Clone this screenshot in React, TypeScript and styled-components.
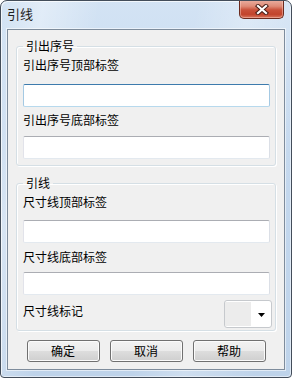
import React from "react";
import styled, { createGlobalStyle } from "styled-components";

const GlobalStyle = createGlobalStyle`
  html, body { margin: 0; padding: 0; background: #ffffff; }
  body { font-family: "Noto Sans CJK SC", "Noto Sans", sans-serif; }
  * { box-sizing: border-box; }
`;

const Window = styled.div`
  width: 292px;
  height: 378px;
  border: 1px solid #434d5a;
  border-radius: 7px 7px 4px 4px;
  overflow: hidden;
  display: flex;
  flex-direction: column;
  background:
    linear-gradient(100deg, rgba(255,255,255,0) 0%, rgba(255,255,255,0.35) 12%, rgba(255,255,255,0) 28%, rgba(255,255,255,0) 55%, rgba(255,255,255,0.25) 70%, rgba(255,255,255,0) 90%),
    linear-gradient(180deg, #d3e3f4 0%, #c4d8ee 40%, #bed3ea 100%);
  box-shadow: inset 1px 1px 0 rgba(255,255,255,0.7), inset -1px -1px 0 rgba(255,255,255,0.5);
`;

const TitleBar = styled.div`
  height: 28px;
  flex: none;
  display: flex;
  justify-content: space-between;
  align-items: flex-start;
  padding-left: 6px;
`;

const Title = styled.span`
  font-size: 13px;
  line-height: 16px;
  margin-top: 5px;
  color: #1e1e1e;
`;

const CloseButton = styled.div`
  width: 45px;
  height: 19px;
  margin-top: -1px;
  margin-right: 7px;
  border: 1px solid #6b2a1e;
  border-top: none;
  border-radius: 0 0 5px 5px;
  background: linear-gradient(180deg, #eab0a2 0%, #de8a76 35%, #c9513a 55%, #c2442c 80%, #d8765e 100%);
  box-shadow: inset 0 0 0 1px rgba(255, 210, 200, 0.45);
  display: flex;
  align-items: center;
  justify-content: center;
`;

const Client = styled.div`
  flex: none;
  height: 341px;
  margin: 0 6px;
  border: 1px solid #7e8c9c;
  background: #f0f0f0;
  padding: 0 8px;
  display: flex;
  flex-direction: column;
  box-shadow: 0 0 0 1px rgba(255, 255, 255, 0.55);
`;

const Group = styled.fieldset<{ $top: number }>`
  margin: ${(p) => p.$top}px 0 0;
  padding: 4px 5px ${(p) => (p.$top > 9 ? 2 : 6)}px 6px;
  min-inline-size: 0;
  border: 1px solid #d5dfe5;
  border-radius: 3px;
  box-shadow: inset 1px 1px 0 #ffffff, 1px 1px 0 #ffffff;
  display: flex;
  flex-direction: column;
`;

const Legend = styled.legend`
  padding: 0 3px;
  font-size: 12px;
  line-height: 14px;
  color: #000;
`;

const Label = styled.span<{ $top: number }>`
  display: block;
  margin-top: ${(p) => p.$top}px;
  font-size: 12px;
  line-height: 16px;
  color: #000;
`;

const TextInput = styled.input<{ $top: number; $focused?: boolean }>`
  display: block;
  width: 247px;
  height: 23px;
  margin: ${(p) => p.$top}px 0 0;
  padding: 0 3px;
  background: #ffffff;
  border: 1px solid;
  border-radius: 2px;
  outline: none;
  font: 12px "Noto Sans CJK SC", sans-serif;
  border-color: ${(p) =>
    p.$focused ? "#3d7bad #a4c9e3 #b7d9ed #a4c9e3" : "#abadb3 #dbdfe6 #e3e9ef #e2e3ea"};
`;

const MarkRow = styled.div`
  display: flex;
  justify-content: space-between;
  align-items: flex-start;
  margin-top: 5px;
  margin-right: -2px;
`;

const Combo = styled.div`
  width: 48px;
  height: 28px;
  border: 1px solid #c6c9cd;
  border-radius: 3px;
  background: #ffffff;
  padding: 1px 0 1px 0;
  display: flex;
  align-items: stretch;
`;

const Swatch = styled.div`
  width: 26px;
  background: #ececec;
`;

const ArrowArea = styled.div`
  flex: 1;
  display: flex;
  align-items: center;
  justify-content: center;
  padding-top: 2px;
`;

const ButtonRow = styled.div`
  display: flex;
  justify-content: center;
  gap: 10px;
  margin-top: 9px;
`;

const Button = styled.button`
  width: 73px;
  height: 22px;
  padding: 0;
  border: 1px solid #707070;
  border-radius: 3px;
  background: linear-gradient(180deg, #f2f2f2 0%, #ebebeb 50%, #dddddd 51%, #cfcfcf 100%);
  box-shadow: inset 0 0 0 1px #fbfbfb;
  font: 12px/16px "Noto Sans CJK SC", sans-serif;
  color: #000;
`;

const CloseIcon = () => (
  <svg width="14" height="11" viewBox="0 0 14 11">
    <path d="M3 2 L11 9 M11 2 L3 9" stroke="#4a1f18" strokeWidth="4.2" strokeLinecap="square" />
    <path d="M3 2 L11 9 M11 2 L3 9" stroke="#ffffff" strokeWidth="2.2" strokeLinecap="square" />
  </svg>
);

const DropArrow = () => (
  <svg width="7" height="4" viewBox="0 0 7 4">
    <path d="M0 0 H7 L3.5 4 Z" fill="#000" />
  </svg>
);

export default function App() {
  return (
    <>
      <GlobalStyle />
      <Window>
        <TitleBar>
          <Title>引线</Title>
          <CloseButton>
            <CloseIcon />
          </CloseButton>
        </TitleBar>
        <Client>
          <Group $top={9}>
            <Legend>引出序号</Legend>
            <Label $top={0}>引出序号顶部标签</Label>
            <TextInput $top={11} $focused />
            <Label $top={5}>引出序号底部标签</Label>
            <TextInput $top={8} />
          </Group>
          <Group $top={10}>
            <Legend>引线</Legend>
            <Label $top={0}>尺寸线顶部标签</Label>
            <TextInput $top={10} />
            <Label $top={6}>尺寸线底部标签</Label>
            <TextInput $top={7} />
            <MarkRow>
              <Label $top={3}>尺寸线标记</Label>
              <Combo>
                <Swatch />
                <ArrowArea>
                  <DropArrow />
                </ArrowArea>
              </Combo>
            </MarkRow>
          </Group>
          <ButtonRow>
            <Button>确定</Button>
            <Button>取消</Button>
            <Button>帮助</Button>
          </ButtonRow>
        </Client>
      </Window>
    </>
  );
}
